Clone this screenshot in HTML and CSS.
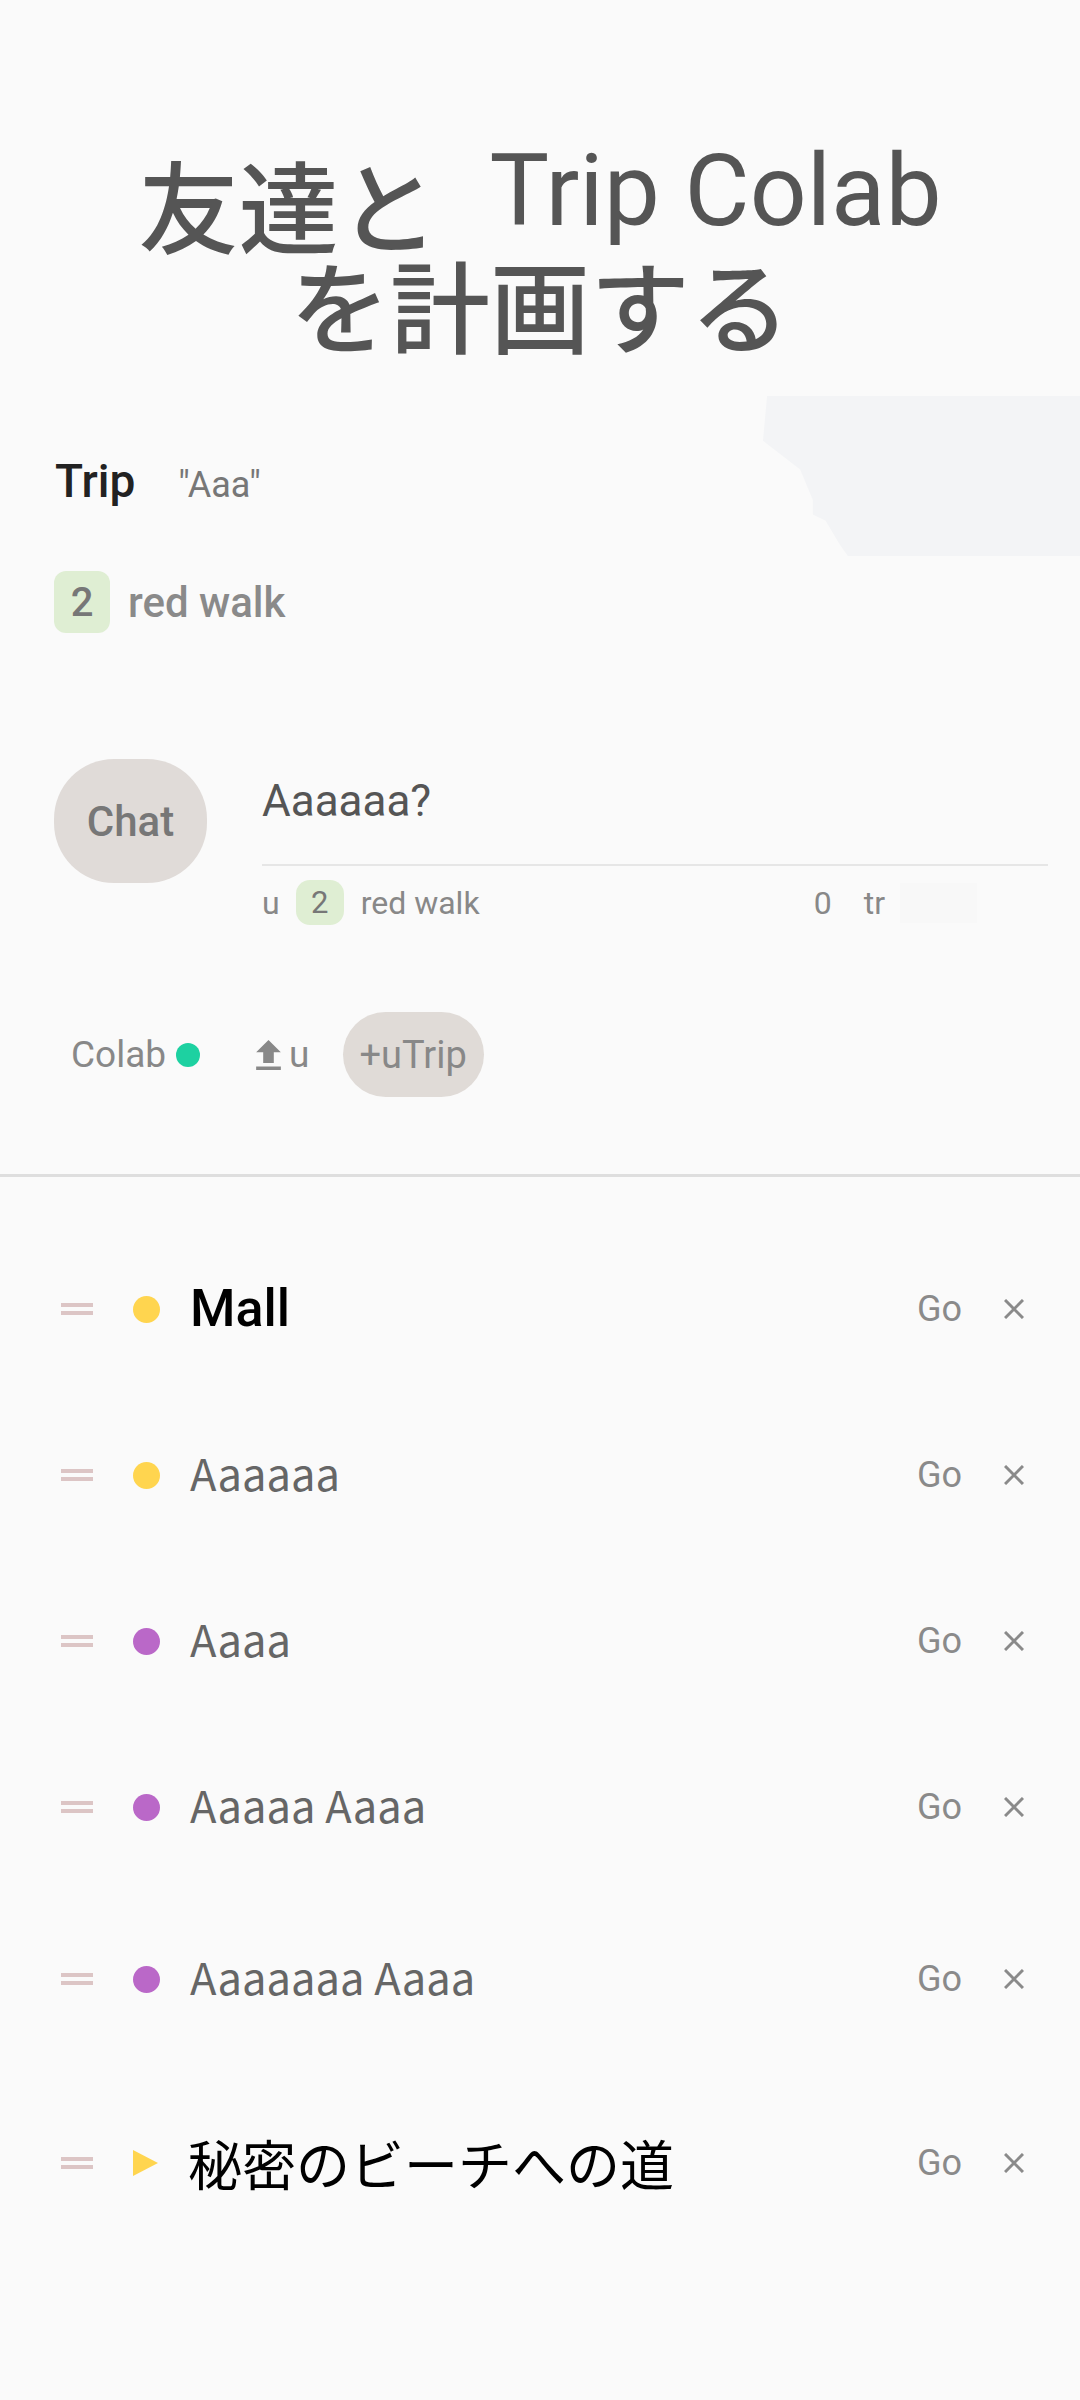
FILE: index.html
```html
<!DOCTYPE html>
<html lang="ja">
<head>
<meta charset="utf-8">
<title>Trip Colab</title>
<link rel="stylesheet" href="styles.css">
</head>
<body>
<main class="screen">
  <section class="hero">
    <h1 class="title"><span class="title-line">友達と<span class="title-en">Trip Colab</span></span><span class="title-line">を計画する</span></h1>

    <div class="trip-head">
      <span class="trip-label">Trip</span>
      <span class="trip-quote">"Aaa"</span>
    </div>

    <div class="tag-line">
      <span class="badge badge-lg">2</span>
      <span class="tag-name">red walk</span>
    </div>

    <div class="chat-row">
      <button class="chat-btn" type="button">Chat</button>
      <div class="chat-body">
        <div class="chat-msg">Aaaaaa?</div>
        <div class="chat-meta">
          <span>u</span>
          <span class="badge badge-sm">2</span>
          <span>red walk</span>
          <span class="meta-right">
            <span>0</span>
            <span class="meta-tr">tr</span>
            <span class="ghost"></span>
          </span>
        </div>
      </div>
    </div>

    <div class="actions">
      <span>Colab</span>
      <span class="status-dot"></span>
      <svg class="upload" viewBox="5 3 14 17" aria-hidden="true"><path d="M9 16h6v-6h4l-7-7-7 7h4zm-4 2h14v2H5z"/></svg>
      <span class="upload-label">u</span>
      <button class="pill" type="button">+uTrip</button>
    </div>
  </section>

  <hr class="divider">

  <ul class="stops">
    <li class="stop">
      <span class="handle"></span>
      <span class="marker yellow"></span>
      <span class="name strong">Mall</span>
      <span class="go">Go</span>
      <svg class="close" viewBox="0 0 20 20" aria-hidden="true"><path d="M1 1L19 19M19 1L1 19"/></svg>
    </li>
    <li class="stop">
      <span class="handle"></span>
      <span class="marker yellow"></span>
      <span class="name">Aaaaaa</span>
      <span class="go">Go</span>
      <svg class="close" viewBox="0 0 20 20" aria-hidden="true"><path d="M1 1L19 19M19 1L1 19"/></svg>
    </li>
    <li class="stop">
      <span class="handle"></span>
      <span class="marker purple"></span>
      <span class="name">Aaaa</span>
      <span class="go">Go</span>
      <svg class="close" viewBox="0 0 20 20" aria-hidden="true"><path d="M1 1L19 19M19 1L1 19"/></svg>
    </li>
    <li class="stop">
      <span class="handle"></span>
      <span class="marker purple"></span>
      <span class="name">Aaaaa Aaaa</span>
      <span class="go">Go</span>
      <svg class="close" viewBox="0 0 20 20" aria-hidden="true"><path d="M1 1L19 19M19 1L1 19"/></svg>
    </li>
    <li class="stop">
      <span class="handle"></span>
      <span class="marker purple"></span>
      <span class="name">Aaaaaaa Aaaa</span>
      <span class="go">Go</span>
      <svg class="close" viewBox="0 0 20 20" aria-hidden="true"><path d="M1 1L19 19M19 1L1 19"/></svg>
    </li>
    <li class="stop">
      <span class="handle"></span>
      <span class="marker play"></span>
      <span class="name jp">秘密のビーチへの道</span>
      <span class="go">Go</span>
      <svg class="close" viewBox="0 0 20 20" aria-hidden="true"><path d="M1 1L19 19M19 1L1 19"/></svg>
    </li>
  </ul>
</main>
</body>
</html>
```

FILE: styles.css
```css
* { box-sizing: border-box; }

html, body {
  margin: 0;
  padding: 0;
  background: #fafafa;
}

body {
  font-family: Roboto, "Noto Sans CJK JP", sans-serif;
  color: #555;
}

.screen {
  width: 1080px;
  min-height: 2400px;
}

.hero {
  position: relative;
}

.hero::before {
  content: "";
  position: absolute;
  top: 396px;
  right: 0;
  width: 318px;
  height: 160px;
  background: #f3f4f6;
  clip-path: polygon(1.6% 0, 100% 0, 100% 100%, 27% 100%, 24.5% 93%, 20% 78%, 16% 74%, 16% 65%, 12% 46%, 0.3% 28%);
}

.title {
  position: relative;
  display: flex;
  flex-direction: column;
  align-items: center;
  margin: 0;
  padding-top: 153px;
  font: 500 100px/100px "Noto Sans CJK JP", sans-serif;
  color: #555;
}

.title-line {
  display: block;
  height: 100px;
  white-space: nowrap;
}

.title-en {
  font-family: Roboto, sans-serif;
  font-weight: 400;
  line-height: 60px;
  margin-left: 51px;
  vertical-align: 21px;
}

.trip-head {
  position: relative;
  display: flex;
  align-items: baseline;
  margin-top: 98px;
  padding-left: 55px;
  height: 60px;
  line-height: 60px;
}

.trip-label {
  font: 500 46px/60px Roboto, sans-serif;
  color: #222;
}

.trip-quote {
  margin-left: 43px;
  font: 400 36px/60px Roboto, sans-serif;
  color: #777;
}

.tag-line {
  display: flex;
  align-items: center;
  margin-top: 60px;
  padding-left: 54px;
}

.badge {
  display: flex;
  align-items: center;
  justify-content: center;
  background: #dfeed3;
  color: #777;
  font-family: Roboto, sans-serif;
}

.badge-lg {
  width: 56px;
  height: 62px;
  border-radius: 12px;
  font-size: 40px;
  font-weight: 500;
}

.tag-name {
  margin-left: 18px;
  font: 500 42px Roboto, sans-serif;
  color: #8a8a8a;
}

.chat-row {
  display: flex;
  margin-top: 126px;
  padding-left: 54px;
  padding-right: 32px;
}

.chat-btn {
  flex-shrink: 0;
  width: 153px;
  height: 124px;
  border: 0;
  border-radius: 60px;
  background: #e0dbd8;
  font: 500 42px Roboto, sans-serif;
  color: #777;
  padding: 0;
}

.chat-body {
  flex: 1;
  margin-left: 55px;
}

.chat-msg {
  padding-top: 12px;
  padding-bottom: 33px;
  border-bottom: 2px solid #e6e6e6;
  font: 400 44px/60px Roboto, sans-serif;
  color: #555;
}

.chat-meta {
  display: flex;
  align-items: center;
  height: 45px;
  margin-top: 14px;
  font: 400 32px Roboto, sans-serif;
  color: #888;
}

.badge-sm {
  width: 48px;
  height: 45px;
  margin: 0 17px 0 16px;
  border-radius: 14px;
  font-size: 31px;
}

.meta-right {
  display: flex;
  align-items: center;
  margin-left: auto;
  margin-right: 71px;
}

.meta-tr {
  margin-left: 32px;
}

.ghost {
  width: 77px;
  height: 40px;
  margin-left: 15px;
  background: #f8f8f8;
}

.actions {
  display: flex;
  align-items: center;
  height: 85px;
  margin-top: 87px;
  padding-left: 71px;
  font: 400 37px Roboto, sans-serif;
  color: #888;
}

.status-dot {
  width: 24px;
  height: 24px;
  margin-left: 10px;
  border-radius: 50%;
  background: #1dd1a1;
}

.upload {
  width: 25px;
  height: 30px;
  margin-left: 56px;
  fill: #888;
}

.upload-label {
  margin-left: 8px;
}

.pill {
  height: 85px;
  margin-left: 33px;
  padding: 0 17px;
  border: 0;
  border-radius: 43px;
  background: #e0dbd7;
  font: 400 38px Roboto, sans-serif;
  color: #888;
}

.divider {
  height: 3px;
  margin: 77px 0 0;
  border: 0;
  background: #dedede;
}

.stops {
  list-style: none;
  margin: 49px 0 0;
  padding: 0;
}

.stop {
  display: flex;
  align-items: center;
  height: 166px;
  padding: 0 56px 0 61px;
}

.stop:nth-child(5) { margin-top: 6px; }
.stop:nth-child(6) { margin-top: 18px; }

.handle {
  flex-shrink: 0;
  width: 32px;
  height: 12px;
  border-top: 4px solid #dcc5c5;
  border-bottom: 4px solid #dcc5c5;
}

.marker {
  flex-shrink: 0;
  width: 27px;
  height: 27px;
  margin-left: 40px;
  border-radius: 50%;
}

.marker.yellow { background: #ffd54f; }
.marker.purple { background: #ba68c8; }

.marker.play {
  width: 25px;
  height: 26px;
  border-radius: 0;
  background: #ffd54f;
  clip-path: polygon(0 0, 100% 50%, 0 100%);
}

.name {
  flex: 1;
  margin-left: 30px;
  padding-bottom: 6px;
  font: 400 43.5px "Noto Sans CJK JP", sans-serif;
  color: #666;
}

.name.strong {
  padding-bottom: 2px;
  font: 500 52px Roboto, sans-serif;
  color: #000;
}

.name.jp {
  padding-bottom: 2px;
  font: 400 54px "Noto Sans CJK JP", sans-serif;
  color: #000;
}

.go {
  font: 400 36px Roboto, sans-serif;
  color: #8a8a8a;
}

.close {
  width: 20px;
  height: 20px;
  margin-left: 42px;
  fill: none;
  stroke: #8a8a8a;
  stroke-width: 3;
}
```
